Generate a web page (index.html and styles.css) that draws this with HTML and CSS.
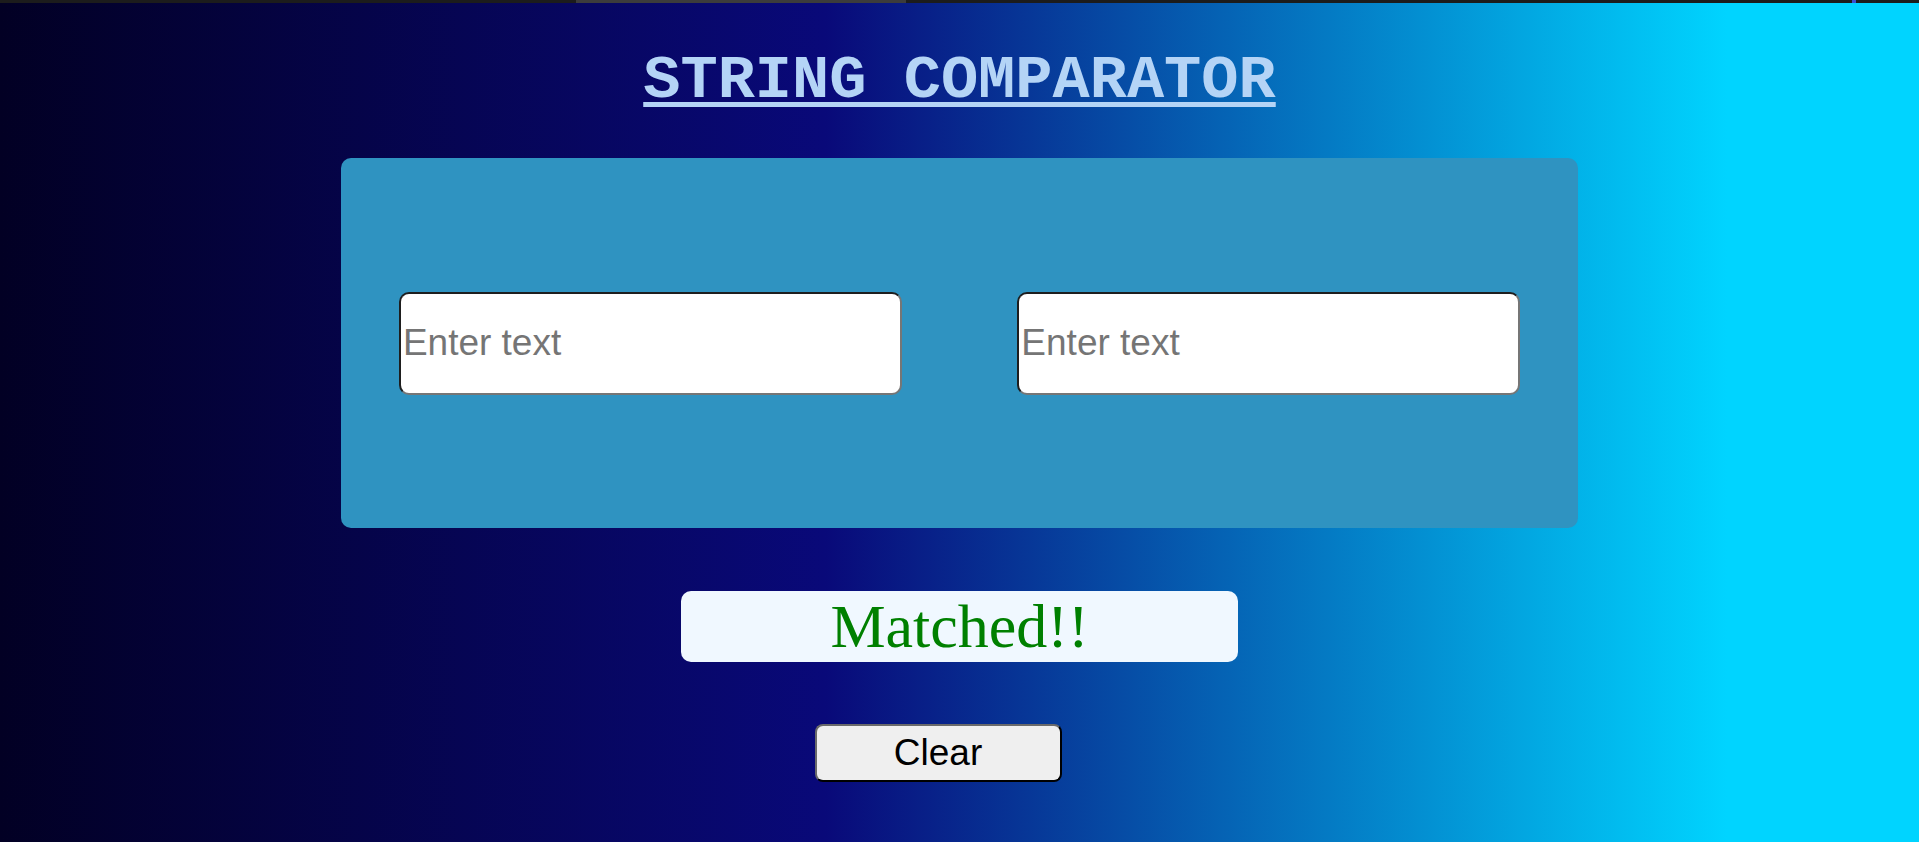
FILE: index.html
```html
<!DOCTYPE html>
<html lang="en">
<head>
<meta charset="utf-8">
<title>String Comparator</title>
<link rel="stylesheet" href="styles.css">
</head>
<body>
<div class="topstrip"></div>
<main class="page">
  <h1 class="title">STRING COMPARATOR</h1>
  <section class="card">
    <input class="field" type="text" placeholder="Enter text">
    <input class="field" type="text" placeholder="Enter text">
  </section>
  <div class="result">Matched!!</div>
  <button class="clear" type="button">Clear</button>
</main>
</body>
</html>
```

FILE: styles.css
```css
html, body {
  margin: 0;
  padding: 0;
}
body {
  min-height: 100vh;
  background: linear-gradient(90deg, #020024 0%, #090979 43%, #00d4ff 90%);
  font-family: "Liberation Sans", Arial, sans-serif;
  overflow: hidden;
}
.topstrip {
  height: 3px;
  background: linear-gradient(90deg, #1c1c1c 0%, #1c1c1c 30%, #3c3c3c 30%, #3c3c3c 47.2%, #1c1c1c 47.2%, #1c1c1c 96.5%, #3a4fd0 96.5%, #3a4fd0 96.7%, #1c1c1c 96.7%);
}
.page {
  padding: 0 8px;
  display: flex;
  flex-direction: column;
  align-items: center;
}
.title {
  margin: 45px 0 0;
  font-family: "Liberation Mono", "Courier New", monospace;
  font-weight: bold;
  font-size: 62px;
  line-height: 65px;
  color: #b4d4f6;
  text-decoration: underline;
  text-decoration-thickness: 5px;
  text-underline-offset: 5px;
}
.card {
  margin-top: 45px;
  width: 65%;
  height: 370px;
  background: #2f93c1;
  border-radius: 10px;
  display: flex;
  justify-content: space-around;
  align-items: center;
}
.field {
  box-sizing: border-box;
  width: calc(40% + 8px);
  height: 103px;
  padding: 1px 2px;
  border-width: 2px;
  border-style: solid;
  border-color: #1e1e1e #767676 #767676 #1e1e1e;
  border-radius: 10px;
  background: #ffffff;
  font-family: "Liberation Sans", Arial, sans-serif;
  font-size: 37px;
  color: #000;
  outline: none;
}
.field::placeholder {
  color: #757575;
}
.result {
  margin-top: 63px;
  width: 557px;
  height: 71px;
  border-radius: 10px;
  background: #f0f8ff;
  color: #008000;
  font-family: "Liberation Serif", "Times New Roman", serif;
  font-size: 62px;
  line-height: 71px;
  text-align: center;
}
.clear {
  margin-top: 62px;
  margin-right: 43px;
  box-sizing: border-box;
  width: 247px;
  height: 58px;
  border-width: 2px;
  border-style: solid;
  border-color: #6a6a6a #000 #000 #6a6a6a;
  border-radius: 8px;
  background: #efefef;
  color: #000;
  font-family: "Liberation Sans", Arial, sans-serif;
  font-size: 37px;
  padding: 0;
}
```
